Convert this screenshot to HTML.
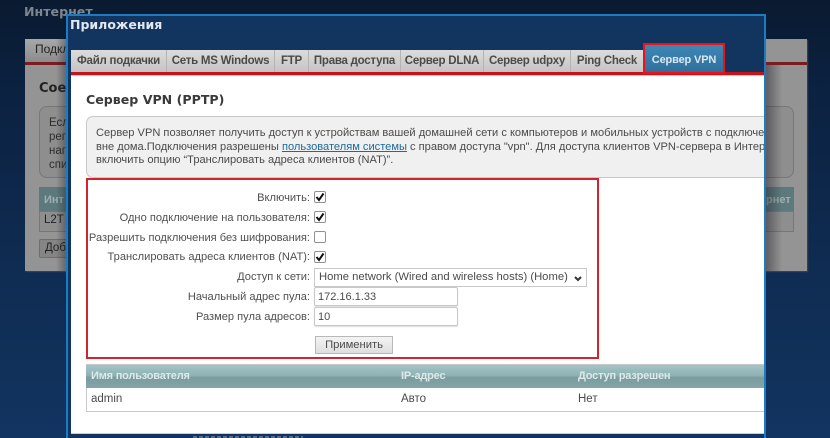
<!DOCTYPE html>
<html lang="ru"><head><meta charset="utf-8"><title>Сервер VPN</title>
<style>
html,body{margin:0;padding:0}
body{width:830px;height:438px;overflow:hidden;position:relative;font-family:"Liberation Sans",Arial,sans-serif;background:linear-gradient(180deg,#0a1a30 0,#0b2140 80px,#0f2c52 270px,#123460 438px);}
div,span,a{position:absolute;white-space:nowrap;box-sizing:border-box}
.t{font-size:11.5px;color:#4a4a4a;line-height:14px}
.tab{top:50px;height:22px;background:linear-gradient(#dcdcdc,#c4c4c4);border-right:1px solid #b4b4b4;font-weight:bold;font-size:11.5px;letter-spacing:-.25px;color:#4a4a4a;line-height:22px;text-align:center}
.lab{right:520px;font-size:11.1px;color:#505050;line-height:14px}
.cb{left:314px;width:12px;height:12px;border:1px solid #909090;border-radius:2px;background:#fff}
.cb svg{position:absolute;left:0;top:0}
.inp{left:314px;width:144px;height:19px;border:1px solid #c8c8c8;border-radius:2px;background:#fff;font-size:11px;color:#4a4a4a;padding-left:3px;line-height:19px;box-shadow:0 1px 1px #ddd}
.th{top:369px;font-weight:bold;font-size:11px;letter-spacing:-.2px;color:#dfe9ea;line-height:14px}
</style></head>
<body>
<!-- background page -->
<div style="left:24px;top:3px;font-family:'DejaVu Sans',sans-serif;font-weight:bold;font-size:12.6px;line-height:18px;color:#7f858e">Интернет</div>
<div style="left:25px;top:39px;width:782px;height:232px;background:#949494;box-shadow:1px 1px 1px #445"></div>
<div style="left:25px;top:39px;width:44px;height:23px;background:linear-gradient(#a8a8a8,#8c8c8c)"></div>
<div style="left:35px;top:42px;font-size:12px;color:#222;line-height:14px">Подкл</div>
<div style="left:25px;top:62px;width:782px;height:3px;background:#7a1c22"></div>
<div style="left:39px;top:81px;font-family:'DejaVu Sans',sans-serif;font-weight:bold;font-size:13px;line-height:16px;color:#222">Сое</div>
<div style="left:39px;top:106px;width:755px;height:72px;border:1px solid #777;border-radius:8px;background:#8e8e8e"></div>
<div class="t" style="left:49px;top:116px;color:#2c2c2c;line-height:14px;white-space:pre">Есл
рег
наг
спи</div>
<div style="left:39px;top:187px;width:755px;height:24px;background:#5c7a7c"></div>
<div style="left:44px;top:193px;font-weight:bold;font-size:11px;color:#9fb0b2;line-height:14px">Инт</div>
<div style="left:766px;top:193px;font-weight:bold;font-size:11px;color:#9fb0b2;line-height:14px">рнет</div>
<div style="left:39px;top:211px;width:755px;height:21px;background:#8e8e8e;border:1px solid #777"></div>
<div style="left:44px;top:213px;font-size:11.5px;color:#222;line-height:14px">L2T</div>
<div style="left:39px;top:239px;width:40px;height:19px;background:#858585;border:1px solid #6e6e6e;border-radius:2px"></div>
<div style="left:45px;top:241px;font-size:11.5px;color:#222;line-height:14px">Доб</div>
<div style="left:56px;top:39px;width:12px;height:232px;background:linear-gradient(90deg,rgba(30,30,40,0),rgba(30,30,40,.45))"></div>
<div style="left:766px;top:65px;width:16px;height:206px;background:linear-gradient(90deg,rgba(30,30,40,.45),rgba(30,30,40,0))"></div>
<div style="left:193px;top:436px;width:110px;height:2px;background:repeating-linear-gradient(90deg,#5a6c88 0 4px,#12355f 4px 6px)"></div>

<!-- modal -->
<div style="left:66px;top:14px;width:700px;height:421px;background:#12355f;border:2px solid #1b7cc4;border-bottom:0"></div>
<div style="left:66px;top:435px;width:2px;height:3px;background:#1b7cc4"></div>
<div style="left:764px;top:435px;width:2px;height:3px;background:#1b7cc4"></div>
<div style="left:70px;top:17px;font-family:'DejaVu Sans',sans-serif;font-weight:bold;font-size:12.5px;line-height:16px;color:#e4e8ee">Приложения</div>

<div class="tab" style="left:71px;width:96px">Файл подкачки</div>
<div class="tab" style="left:167px;width:108px">Сеть MS Windows</div>
<div class="tab" style="left:275px;width:34px">FTP</div>
<div class="tab" style="left:309px;width:92px">Права доступа</div>
<div class="tab" style="left:401px;width:83px">Сервер DLNA</div>
<div class="tab" style="left:484px;width:87px">Сервер udpxy</div>
<div class="tab" style="left:571px;width:72px;border-right:0">Ping Check</div>
<div style="left:71px;top:72px;width:693px;height:4px;background:#c3141c;border-bottom:1px solid #e8b8bb"></div>
<div style="left:643px;top:43px;width:82px;height:31px;background:linear-gradient(#3f87b5,#2f6f9e);border:2px solid #f01018;font-weight:bold;font-size:11px;letter-spacing:-.15px;line-height:21px;color:#dbe8f2;text-align:center;padding-top:5px">Сервер VPN</div>

<div style="left:71px;top:76px;width:693px;height:358px;background:#fff"></div>
<div style="left:86px;top:91px;font-family:'DejaVu Sans',sans-serif;font-weight:bold;font-size:12.6px;line-height:18px;color:#3a3a3a">Сервер VPN (PPTP)</div>

<div style="left:86px;top:116px;width:678px;height:62px;background:#f0f0f0;border:1px solid #c8c8c8;border-right:0;border-radius:7px 0 0 7px"></div>
<div style="left:96px;top:127px;width:668px;height:42px;overflow:hidden;font-size:11.1px;line-height:13.7px;color:#4a4a4a">Сервер VPN позволяет получить доступ к устройствам вашей домашней сети с компьютеров и мобильных устройств с подключением<br>вне дома.Подключения разрешены <a style="position:static;color:#1f6a9a;text-decoration:underline">пользователям системы</a> с правом доступа "vpn". Для доступа клиентов VPN-сервера в Интернет<br>включить опцию “Транслировать адреса клиентов (NAT)”.</div>

<div style="left:86px;top:178px;width:513px;height:181px;border:2px solid #d2242e"></div>

<div class="lab" style="top:191px">Включить:</div>
<div class="cb" style="top:191px"><svg width="10" height="10" viewBox="0 0 10 10"><path d="M1.5 5 L4 8 L8.5 1.5" fill="none" stroke="#111" stroke-width="2"/></svg></div>
<div class="lab" style="top:211px">Одно подключение на пользователя:</div>
<div class="cb" style="top:211px"><svg width="10" height="10" viewBox="0 0 10 10"><path d="M1.5 5 L4 8 L8.5 1.5" fill="none" stroke="#111" stroke-width="2"/></svg></div>
<div class="lab" style="top:231px">Разрешить подключения без шифрования:</div>
<div class="cb" style="top:231px"></div>
<div class="lab" style="top:250px">Транслировать адреса клиентов (NAT):</div>
<div class="cb" style="top:251px"><svg width="10" height="10" viewBox="0 0 10 10"><path d="M1.5 5 L4 8 L8.5 1.5" fill="none" stroke="#111" stroke-width="2"/></svg></div>
<div class="lab" style="top:270px">Доступ к сети:</div>
<div style="left:314px;top:268px;width:273px;height:19px;border:1px solid #c8c8c8;background:#fff;font-size:11.25px;color:#4a4a4a;padding-left:4px;line-height:16px">Home network (Wired and wireless hosts) (Home)<svg style="position:absolute;left:258px;top:6px" width="10" height="8" viewBox="0 0 10 8"><path d="M2 2 L5 5 L8 2" fill="none" stroke="#333" stroke-width="2"/></svg></div>
<div class="lab" style="top:290px">Начальный адрес пула:</div>
<div class="inp" style="top:287px">172.16.1.33</div>
<div class="lab" style="top:310px">Размер пула адресов:</div>
<div class="inp" style="top:307px">10</div>
<div style="left:315px;top:336px;width:78px;height:18px;background:linear-gradient(#f4f4f4,#dedede);border:1px solid #b8b8b8;font-size:11.2px;color:#4a4a4a;text-align:center;line-height:16px">Применить</div>

<div style="left:86px;top:364px;width:678px;height:24px;background:linear-gradient(#a2c4c6 0,#8fb2b4 45%,#7a9c9f 55%,#83a5a8 100%);border-top:1px solid #c8c8c8"></div>
<div class="th" style="left:91px">Имя пользователя</div>
<div class="th" style="left:401px">IP-адрес</div>
<div class="th" style="left:578px">Доступ разрешен</div>
<div style="left:86px;top:388px;width:678px;height:24px;border:1px solid #c8c8c8;border-top:0;border-right:0;background:#fff"></div>
<div class="t" style="left:91px;top:392px">admin</div>
<div class="t" style="left:401px;top:392px">Авто</div>
<div class="t" style="left:578px;top:392px">Нет</div>
<div style="left:71px;top:433px;width:693px;height:1px;background:#c8ccd2"></div>
</body></html>
